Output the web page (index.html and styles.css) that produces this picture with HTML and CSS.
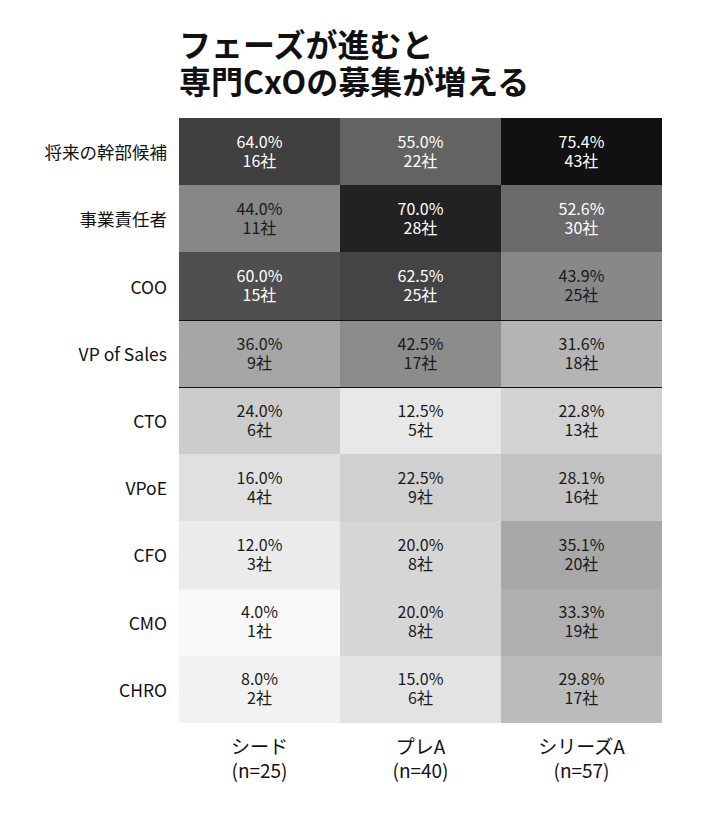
FILE: index.html
```html
<!DOCTYPE html>
<html lang="ja">
<head>
<meta charset="utf-8">
<link rel="stylesheet" href="styles.css">
</head>
<body>
<div class="chart">
  <h1 class="title">フェーズが進むと<br>専門CxOの募集が増える</h1>
  <div class="grid">
    <div class="label">将来の幹部候補</div>
    <div class="cell light-text" style="background:#404040"><span>64.0%</span><span>16社</span></div>
    <div class="cell light-text" style="background:#636363"><span>55.0%</span><span>22社</span></div>
    <div class="cell light-text" style="background:#111111"><span>75.4%</span><span>43社</span></div>

    <div class="label">事業責任者</div>
    <div class="cell" style="background:#878787"><span>44.0%</span><span>11社</span></div>
    <div class="cell light-text" style="background:#222222"><span>70.0%</span><span>28社</span></div>
    <div class="cell light-text" style="background:#6b6b6b"><span>52.6%</span><span>30社</span></div>

    <div class="label">COO</div>
    <div class="cell light-text" style="background:#4f4f4f"><span>60.0%</span><span>15社</span></div>
    <div class="cell light-text" style="background:#444444"><span>62.5%</span><span>25社</span></div>
    <div class="cell" style="background:#888888"><span>43.9%</span><span>25社</span></div>

    <div class="label">VP of Sales</div>
    <div class="cell line-top" style="background:#a6a6a6"><span>36.0%</span><span>9社</span></div>
    <div class="cell line-top" style="background:#8c8c8c"><span>42.5%</span><span>17社</span></div>
    <div class="cell line-top" style="background:#b4b4b4"><span>31.6%</span><span>18社</span></div>

    <div class="label">CTO</div>
    <div class="cell line-top" style="background:#cccccc"><span>24.0%</span><span>6社</span></div>
    <div class="cell line-top" style="background:#e8e8e8"><span>12.5%</span><span>5社</span></div>
    <div class="cell line-top" style="background:#d2d2d2"><span>22.8%</span><span>13社</span></div>

    <div class="label">VPoE</div>
    <div class="cell" style="background:#e0e0e0"><span>16.0%</span><span>4社</span></div>
    <div class="cell" style="background:#d0d0d0"><span>22.5%</span><span>9社</span></div>
    <div class="cell" style="background:#c2c2c2"><span>28.1%</span><span>16社</span></div>

    <div class="label">CFO</div>
    <div class="cell" style="background:#ebebeb"><span>12.0%</span><span>3社</span></div>
    <div class="cell" style="background:#d6d6d6"><span>20.0%</span><span>8社</span></div>
    <div class="cell" style="background:#a8a8a8"><span>35.1%</span><span>20社</span></div>

    <div class="label">CMO</div>
    <div class="cell" style="background:#f8f8f8"><span>4.0%</span><span>1社</span></div>
    <div class="cell" style="background:#d6d6d6"><span>20.0%</span><span>8社</span></div>
    <div class="cell" style="background:#afafaf"><span>33.3%</span><span>19社</span></div>

    <div class="label">CHRO</div>
    <div class="cell" style="background:#f2f2f2"><span>8.0%</span><span>2社</span></div>
    <div class="cell" style="background:#e3e3e3"><span>15.0%</span><span>6社</span></div>
    <div class="cell" style="background:#bbbbbb"><span>29.8%</span><span>17社</span></div>
  </div>
  <div class="axis">
    <div class="spacer"></div>
    <div class="axis-label">シード<br>(n=25)</div>
    <div class="axis-label">プレA<br>(n=40)</div>
    <div class="axis-label">シリーズA<br>(n=57)</div>
  </div>
</div>
</body>
</html>
```

FILE: styles.css
```css
html, body {
  margin: 0;
  padding: 0;
  background: #ffffff;
}

body {
  font-family: "Noto Sans CJK JP", "Noto Sans", sans-serif;
  color: #1a1a1a;
}

.chart {
  width: 720px;
  padding-top: 25px;
}

.title {
  margin: 0 0 19px 179px;
  font-size: 32px;
  line-height: 37px;
  font-weight: 700;
  color: #111111;
}

.grid {
  display: grid;
  grid-template-columns: 179px repeat(3, 161px);
  grid-auto-rows: 67.22px;
}

.label {
  display: flex;
  align-items: center;
  justify-content: flex-end;
  padding-right: 12px;
  font-size: 17.5px;
  color: #111111;
}

.cell {
  display: flex;
  flex-direction: column;
  align-items: center;
  justify-content: center;
  text-align: center;
  font-size: 16px;
  line-height: 19px;
  padding-bottom: 2px;
  color: #1a1a1a;
  box-sizing: border-box;
}

.cell span {
  display: block;
  height: 19px;
}

.cell.light-text {
  color: #ffffff;
}

.cell.line-top {
  border-top: 1px solid #111111;
}

.axis {
  display: grid;
  grid-template-columns: 179px repeat(3, 161px);
  padding-top: 11px;
}

.axis-label {
  text-align: center;
  font-size: 19px;
  line-height: 24px;
  color: #111111;
}
```
